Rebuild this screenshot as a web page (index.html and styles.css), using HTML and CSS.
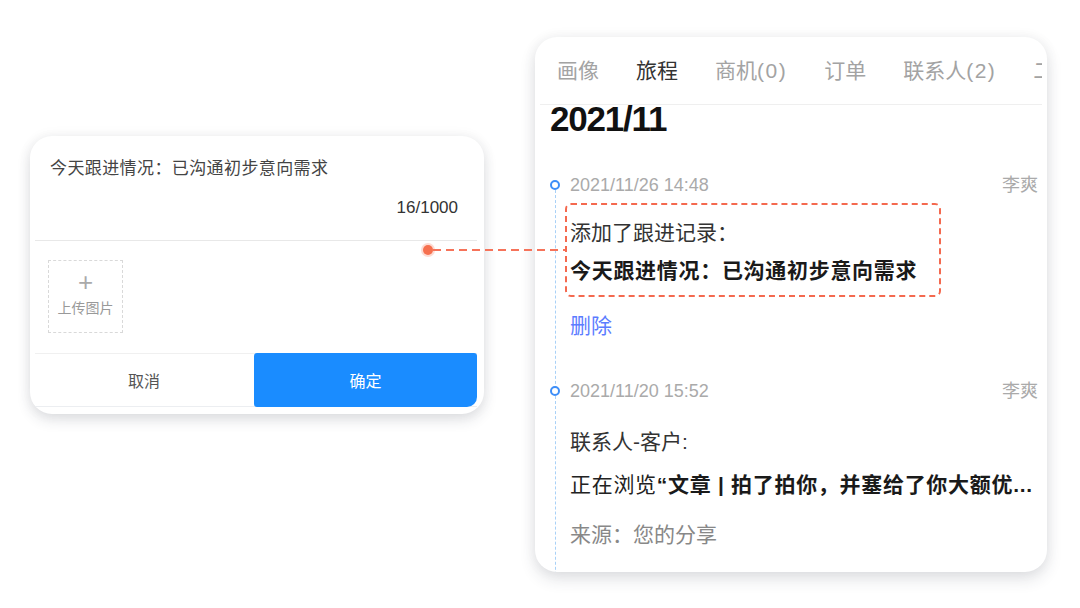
FILE: index.html
```html
<!DOCTYPE html>
<html lang="zh-CN">
<head>
    <meta charset="UTF-8">
    <meta name="viewport" content="width=device-width, initial-scale=1.0">
    <title>跟进记录</title>
    <link rel="stylesheet" href="styles.css">
</head>
<body>

    <div class="stage">

        <div class="note-card">
            <p class="note-text">今天跟进情况：已沟通初步意向需求</p>
            <p class="note-count">16/1000</p>
            <div class="divider"></div>
            <div class="upload">
                <span class="upload-plus">+</span>
                <span class="upload-label">上传图片</span>
            </div>
            <div class="actions">
                <button class="btn-cancel">取消</button>
                <button class="btn-ok">确定</button>
            </div>
        </div>

        <div class="journey-card">
            <nav class="tabs">
                <span class="tab">画像</span>
                <span class="tab active">旅程</span>
                <span class="tab">商机<span class="num">(0)</span></span>
                <span class="tab">订单</span>
                <span class="tab">联系人<span class="num">(2)</span></span>
                <span class="tab">二维码</span>
            </nav>

            <h2 class="month">2021/11</h2>

            <div class="timeline">
                <div class="event">
                    <div class="event-head">
                        <span class="time">2021/11/26 14:48</span>
                        <span class="owner">李爽</span>
                    </div>
                    <div class="record">
                        <p class="label">添加了跟进记录：</p>
                        <p class="detail">今天跟进情况：已沟通初步意向需求</p>
                    </div>
                    <a class="delete">删除</a>
                </div>

                <div class="event second">
                    <div class="event-head">
                        <span class="time">2021/11/20 15:52</span>
                        <span class="owner">李爽</span>
                    </div>
                    <p class="label contact">联系人-客户:</p>
                    <p class="detail browse"><span class="plain">正在浏览</span>“文章 | 拍了拍你，并塞给了你大额优...</p>
                    <p class="source">来源：您的分享</p>
                </div>
            </div>
        </div>

        <!-- annotation linking the note to the record -->
        <div class="connector">
            <span class="connector-dot"></span>
            <span class="connector-line"></span>
        </div>

    </div>

</body>
</html>
```

FILE: styles.css
```css
body {
    margin: 0;
    background: #fff;
    font-family: "Liberation Sans", "Noto Sans CJK SC", sans-serif;
    color: #333;
}

p {
    margin: 0;
}

.stage {
    position: relative;
    display: flex;
    align-items: flex-start;
    gap: 51px;
    padding-left: 30px;
    width: 1080px;
    height: 608px;
    box-sizing: border-box;
    overflow: hidden;
}

/* left: follow-up note editor */
.note-card {
    margin-top: 136px;
    width: 454px;
    height: 278px;
    box-sizing: border-box;
    background: #fff;
    border-radius: 22px;
    box-shadow: 0 6px 14px rgba(40, 50, 70, 0.14), 0 0 14px rgba(0, 0, 0, 0.05);
    padding-top: 21px;
}

.note-text {
    padding-left: 20px;
    font-size: 17px;
    line-height: 24px;
    letter-spacing: 0.4px;
    color: #444;
}

.note-count {
    margin-top: 15px;
    padding-right: 26px;
    text-align: right;
    font-size: 17px;
    line-height: 24px;
    color: #333;
}

.divider {
    margin: 20px 7px 0 5px;
    height: 1px;
    background: #e8e8e8;
}

.upload {
    margin: 19px 0 0 18px;
    width: 75px;
    height: 73px;
    box-sizing: border-box;
    border: 1px dashed #d9d9d9;
    display: flex;
    flex-direction: column;
    align-items: center;
    color: #999;
}

.upload-plus {
    margin-top: 6px;
    font-size: 26px;
    line-height: 30px;
    font-weight: 300;
    color: #aaa;
}

.upload-label {
    margin-top: 2px;
    font-size: 14px;
    line-height: 18px;
}

.actions {
    margin: 20px 7px 0 5px;
    display: flex;
    height: 54px;
    border-top: 1px solid #f0f0f0;
    border-bottom: 1px solid #eceef1;
    box-sizing: border-box;
}

.actions button {
    border: none;
    font-family: inherit;
    font-size: 16px;
    cursor: pointer;
}

.btn-cancel {
    width: 219px;
    padding-right: 7px;
    background: #fff;
    color: #555;
}

.btn-ok {
    flex: 1;
    margin: -1px 0 -1px 0;
    background: #1a8cff;
    color: #fff;
    border-radius: 3px 3px 10px 3px;
}

/* right: customer journey */
.journey-card {
    margin-top: 37px;
    width: 512px;
    height: 535px;
    background: #fff;
    border-radius: 22px;
    box-shadow: 0 7px 16px rgba(40, 50, 70, 0.14), 0 0 14px rgba(0, 0, 0, 0.05);
    overflow: hidden;
}

.tabs {
    display: flex;
    gap: 37px;
    margin: 0 5px;
    padding: 20px 0 0 17px;
    height: 68px;
    box-sizing: border-box;
    border-bottom: 1px solid #efefef;
    white-space: nowrap;
    overflow: hidden;
}

.tab {
    position: relative;
    font-size: 21px;
    line-height: 28px;
    color: #a3a3a3;
}

.tab .num {
    letter-spacing: 1.5px;
}

.tab.active {
    color: #333;
}

.tab.active::after {
    content: "";
    position: absolute;
    left: 7px;
    bottom: -19px;
    width: 30px;
    height: 3px;
    background: #1a8cff;
}

.month {
    margin: -1px 0 0 15px;
    font-size: 35px;
    line-height: 30px;
    font-weight: bold;
    letter-spacing: -1.2px;
    color: #111;
}

.timeline {
    position: relative;
    margin: 39px 0 0 20px;
    padding: 0 9px 0 15px;
}

.timeline::before {
    content: "";
    position: absolute;
    left: 0;
    top: 17px;
    height: 420px;
    border-left: 1px dashed #a9d1f7;
}

.event.second {
    margin-top: 39px;
}

.event-head {
    position: relative;
    display: flex;
    justify-content: space-between;
    font-size: 18px;
    line-height: 24px;
    color: #aaa;
}

.event-head::before {
    content: "";
    position: absolute;
    left: -20px;
    top: 7px;
    width: 10px;
    height: 10px;
    box-sizing: border-box;
    border: 2px solid #3d8ef8;
    border-radius: 50%;
    background: #fff;
}

.record {
    margin: 6px 0 0 -5px;
    width: 376px;
    box-sizing: border-box;
    padding: 14px 4px 10px 3px;
    border: 2px dashed #f4694f;
    border-radius: 6px;
}

.label {
    font-size: 21px;
    line-height: 28px;
    color: #333;
}

.detail {
    margin-top: 10px;
    font-size: 21px;
    line-height: 28px;
    font-weight: bold;
    letter-spacing: 0.7px;
    color: #1a1a1a;
    white-space: nowrap;
}

.delete {
    display: block;
    margin-top: 15px;
    font-size: 21px;
    line-height: 28px;
    color: #5b7cff;
    cursor: pointer;
}

.contact {
    margin-top: 25px;
}

.browse {
    margin-top: 15px;
}

.browse .plain {
    font-weight: normal;
    color: #222;
}

.source {
    margin-top: 22px;
    font-size: 21px;
    line-height: 28px;
    color: #888;
}

/* annotation */
.connector {
    position: absolute;
    left: 423px;
    top: 245px;
    display: flex;
    align-items: center;
    z-index: 2;
}

.connector-dot {
    width: 10px;
    height: 10px;
    border-radius: 50%;
    background: #f6704f;
    box-shadow: 0 0 0 2px rgba(246, 112, 79, 0.25);
}

.connector-line {
    width: 132px;
    height: 2px;
    background: repeating-linear-gradient(to right, #f6735a 0 8px, transparent 8px 13px);
}
```
